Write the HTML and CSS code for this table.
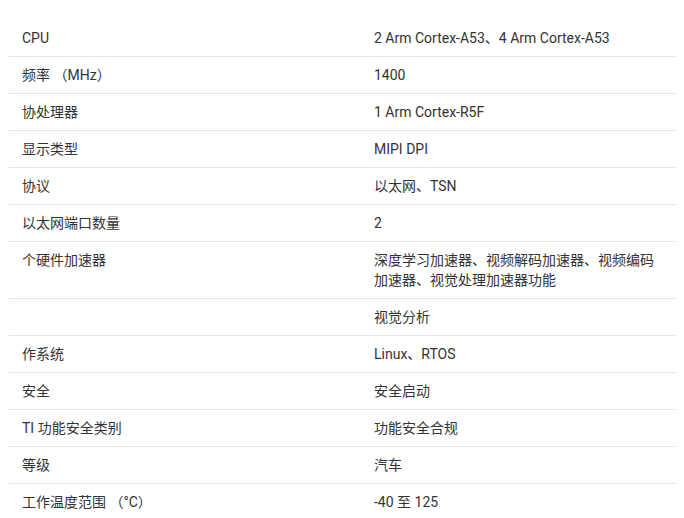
FILE: index.html
```html
<!DOCTYPE html>
<html lang="zh-CN">
<head>
<meta charset="utf-8">
<link rel="stylesheet" href="styles.css">
</head>
<body>
<div class="wrap">
<table class="specs">
<tbody>
<tr><td class="k">CPU</td><td class="v">2 Arm Cortex-A53、4 Arm Cortex-A53</td></tr>
<tr><td class="k">频率 （MHz）</td><td class="v">1400</td></tr>
<tr><td class="k">协处理器</td><td class="v">1 Arm Cortex-R5F</td></tr>
<tr><td class="k">显示类型</td><td class="v">MIPI DPI</td></tr>
<tr><td class="k">协议</td><td class="v">以太网、TSN</td></tr>
<tr><td class="k">以太网端口数量</td><td class="v">2</td></tr>
<tr><td class="k">个硬件加速器</td><td class="v">深度学习加速器、视频解码加速器、视频编码加速器、视觉处理加速器功能</td></tr>
<tr><td class="k"></td><td class="v">视觉分析</td></tr>
<tr><td class="k">作系统</td><td class="v">Linux、RTOS</td></tr>
<tr><td class="k">安全</td><td class="v">安全启动</td></tr>
<tr><td class="k">TI 功能安全类别</td><td class="v">功能安全合规</td></tr>
<tr><td class="k">等级</td><td class="v">汽车</td></tr>
<tr><td class="k">工作温度范围 （°C）</td><td class="v">-40 至 125</td></tr>
</tbody>
</table>
</div>
</body>
</html>
```
FILE: styles.css
```css
html, body {
  margin: 0;
  padding: 0;
  background: #fff;
}
.wrap {
  padding: 20px 8px 0 9px;
}
.specs {
  width: 667px;
  border-collapse: collapse;
  table-layout: fixed;
  font-family: Roboto, "Noto Sans CJK SC", sans-serif;
  font-size: 14px;
  line-height: 20px;
  color: #333;
}
.specs td {
  padding: 8px 12px;
  vertical-align: top;
  border-bottom: 1px solid #e5e5e5;
}
.specs td.k {
  width: 328px;
  padding-left: 13px;
}
.specs td.v {
  padding-left: 12px;
}
```
